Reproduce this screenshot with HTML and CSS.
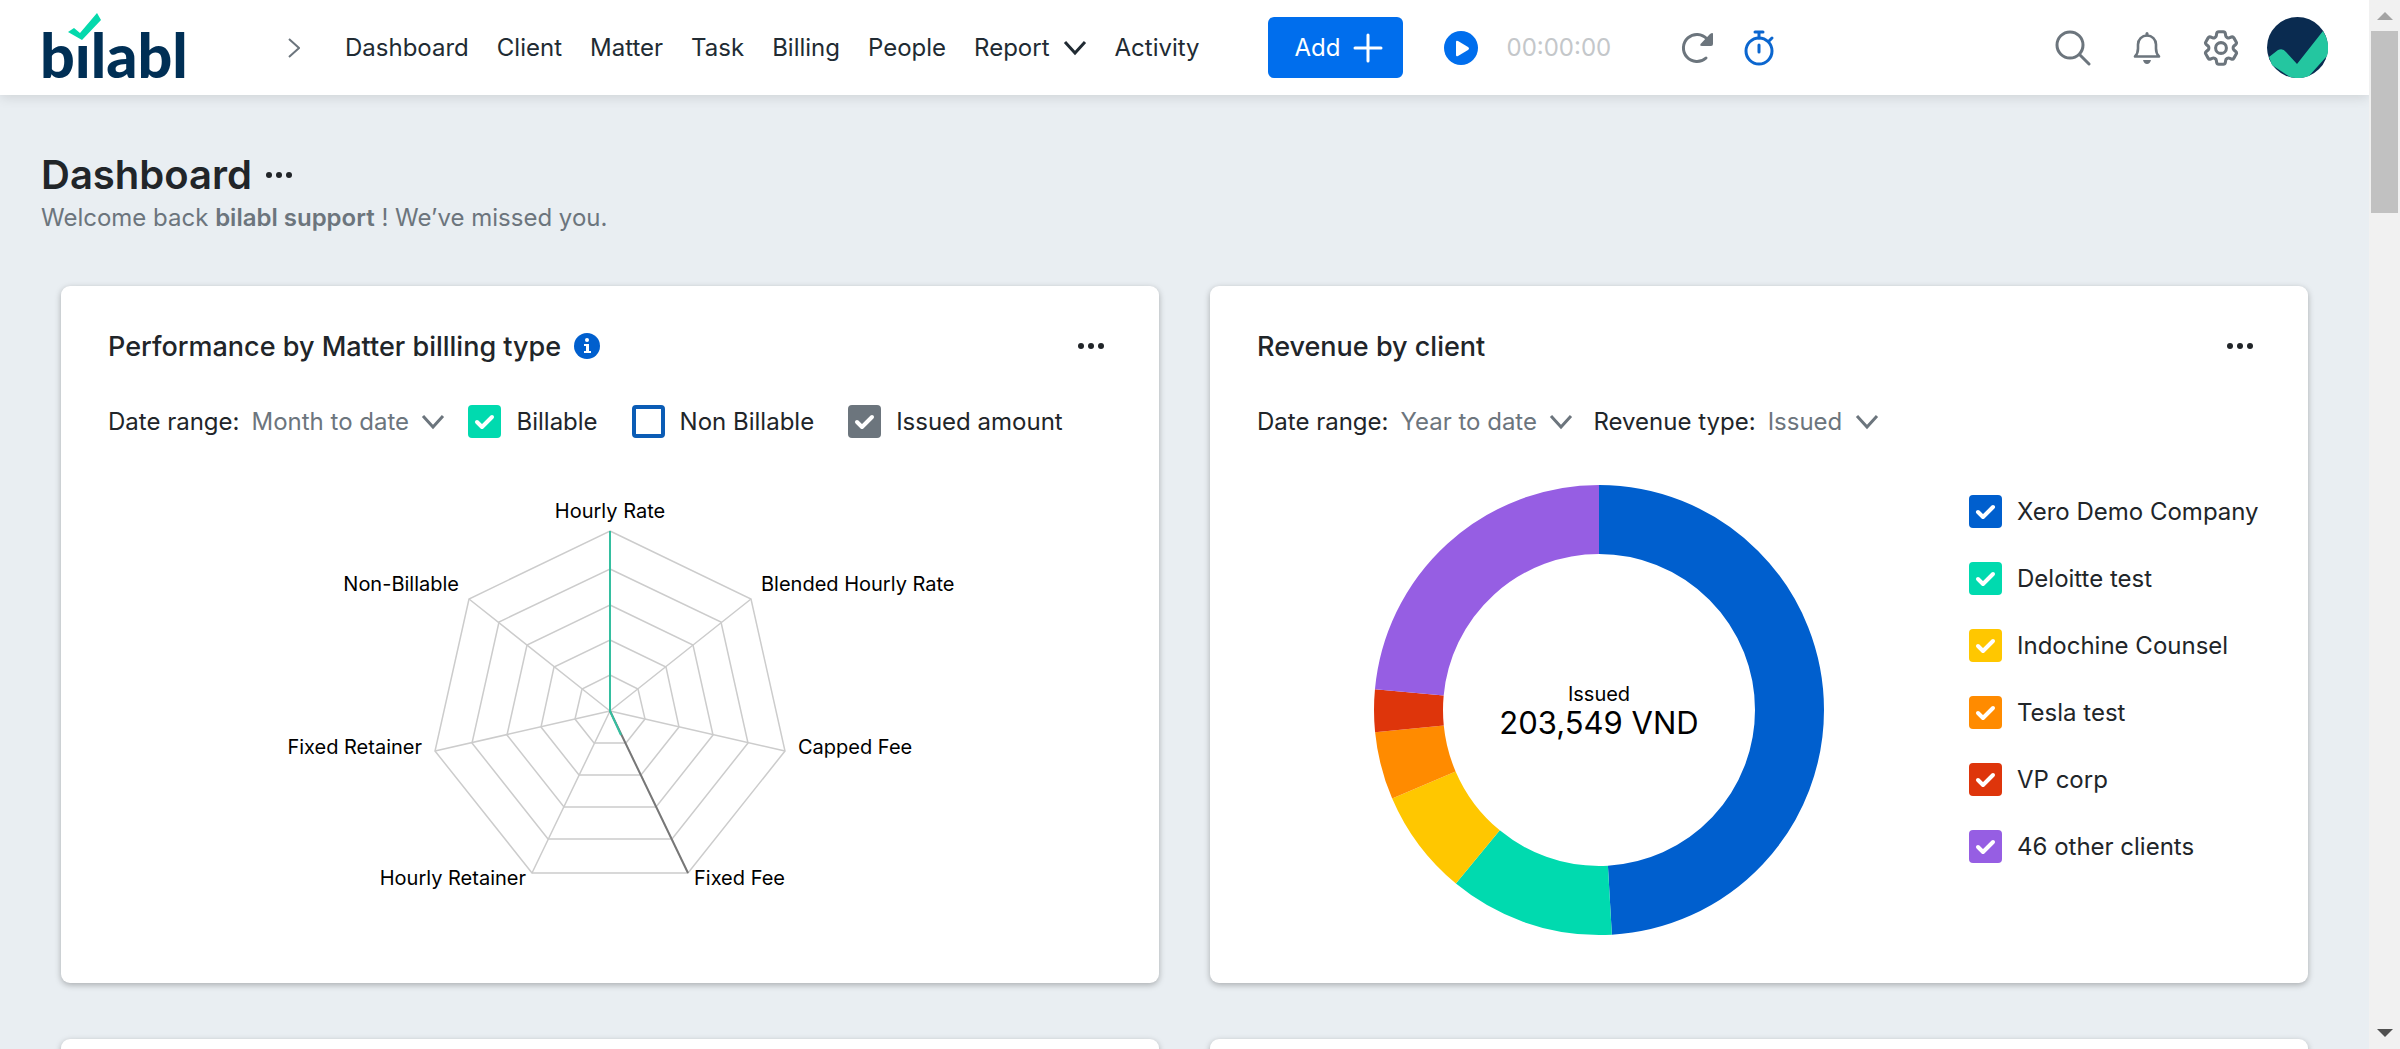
FILE: index.html
```
<!DOCTYPE html>
<html lang="en">
<head>
    <meta charset="UTF-8">
    <meta name="viewport" content="width=device-width, initial-scale=1.0">
    <title>bilabl - Dashboard</title>
    <link rel="stylesheet" href="styles.css">
</head>
<body>
    <div class="app">
        <header class="topbar">
            <a class="logo" href="#" aria-label="bilabl">
                <svg width="150" height="72" viewBox="0 0 150 72">
                    <text class="logo-text" x="0" y="66">bılabl</text>
                    <path d="M28 20l6-4 6 5L57 1l4 7-19 20z" fill="#04d9ac"/>
                </svg>
            </a>
            <button class="expand" aria-label="Expand menu">
                <svg width="12" height="22" viewBox="0 0 12 22"><path d="M1 2l10 9-10 9" fill="none" stroke="#6c757d" stroke-width="2"/></svg>
            </button>
            <nav class="nav">
                <a href="#">Dashboard</a>
                <a href="#">Client</a>
                <a href="#">Matter</a>
                <a href="#">Task</a>
                <a href="#">Billing</a>
                <a href="#">People</a>
                <a href="#" class="nav-drop">Report
                    <svg width="24" height="16" viewBox="0 0 24 16"><path d="M2 2l10 11 10-11" fill="none" stroke="#212b33" stroke-width="3"/></svg>
                </a>
                <a href="#">Activity</a>
            </nav>
            <button class="add-button">Add
                <svg width="30" height="30" viewBox="0 0 30 30"><path d="M15 2v26M2 15h26" stroke="#fff" stroke-width="3" stroke-linecap="round"/></svg>
            </button>
            <div class="timer">
                <button aria-label="Start timer">
                    <svg width="36" height="36" viewBox="0 0 36 36"><circle cx="18" cy="18" r="17" fill="#006eed"/><path d="M13 12v13q0 2 2 1l10-6q2-1.500 0-3l-10-6q-2-1-2 1z" fill="#fff"/></svg>
                </button>
                <span class="time">00:00:00</span>
            </div>
            <div class="timer-tools">
                <button aria-label="Reset timer">
                    <svg width="34" height="34" viewBox="0 0 34 34"><path d="M26 8a13.500 13.500 0 1 0-1 19" fill="none" stroke="#6c757d" stroke-width="3" stroke-linecap="round"/><path d="M32 3v10q0 2-2 2h-9q-3 0-1-2.500L29 3q3-2 3 0z" fill="#6c757d"/></svg>
                </button>
                <button aria-label="Time entries">
                    <svg width="32" height="36" viewBox="0 0 32 36"><g fill="none" stroke="#0b66cf" stroke-width="3" stroke-linecap="round"><circle cx="16" cy="21" r="13"/><path d="M12 2h8M16 3v5M16 15v7M26 11l3-3"/></g></svg>
                </button>
            </div>
            <div class="tools">
                <button aria-label="Search">
                    <svg width="36" height="36" viewBox="0 0 36 36"><g fill="none" stroke="#6c757d" stroke-width="3" stroke-linecap="round"><circle cx="15" cy="15" r="13"/><path d="M25 25l9 9"/></g></svg>
                </button>
                <button aria-label="Notifications">
                    <svg width="36" height="36" viewBox="0 0 36 36"><path d="M6 26.500h24c-2-2-3-4-3-8v-4c0-5-4-9-9-9s-9 4-9 9v4c0 4-1 6-3 8z" fill="none" stroke="#6c757d" stroke-width="2.600" stroke-linejoin="round"/><path d="M18 5V3.500" stroke="#6c757d" stroke-width="3" stroke-linecap="round"/><path d="M14 30h8q-1 4-4 4t-4-4z" fill="#6c757d"/></svg>
                </button>
                <button aria-label="Settings">
                    <svg width="36" height="36" viewBox="2 2 20 20"><g fill="none" stroke="#6c757d" stroke-width="1.700"><path d="M9.594 3.940c.09-.542.56-.94 1.110-.94h2.593c.55 0 1.020.398 1.110.94l.213 1.281c.063.374.313.686.645.87.074.04.147.083.22.127.325.196.72.257 1.075.124l1.217-.456a1.125 1.125 0 0 1 1.370.49l1.296 2.247a1.125 1.125 0 0 1-.26 1.431l-1.003.827c-.293.241-.438.613-.43.992a7.723 7.723 0 0 1 0 .255c-.008.378.137.75.43.991l1.004.827c.424.35.534.955.26 1.430l-1.298 2.247a1.125 1.125 0 0 1-1.369.491l-1.217-.456c-.355-.133-.75-.072-1.076.124a6.470 6.470 0 0 1-.22.128c-.331.183-.581.495-.644.869l-.213 1.281c-.09.543-.56.94-1.110.94h-2.594c-.55 0-1.019-.398-1.110-.94l-.213-1.281c-.062-.374-.312-.686-.644-.87a6.520 6.520 0 0 1-.22-.127c-.325-.196-.72-.257-1.076-.124l-1.217.456a1.125 1.125 0 0 1-1.369-.49l-1.297-2.247a1.125 1.125 0 0 1 .26-1.431l1.004-.827c.292-.24.437-.613.43-.991a6.932 6.932 0 0 1 0-.255c.007-.38-.138-.751-.43-.992l-1.004-.827a1.125 1.125 0 0 1-.26-1.430l1.297-2.247a1.125 1.125 0 0 1 1.370-.491l1.216.456c.356.133.751.072 1.076-.124.072-.044.146-.086.22-.128.332-.183.582-.495.644-.869l.214-1.280z"/><circle cx="12" cy="12" r="3"/></g></svg>
                </button>
            </div>
            <button class="avatar" aria-label="Account">
                <svg width="61" height="61" viewBox="0 0 61 61"><circle cx="30.500" cy="30.500" r="30.500" fill="#0a2b50"/><path d="M2 40l9-7q5-2 8 2l11 12 26-33a30.500 30.500 0 0 1 4 25L42 59a30 30 0 0 1-19 1L5 48z" fill="#24c6a0"/></svg>
            </button>
        </header>

        <main class="content">
            <div class="page-title">
                <h1>Dashboard</h1>
                <button class="more" aria-label="Dashboard options">
                    <svg width="26" height="8" viewBox="0 0 26 8"><g fill="#212529"><circle cx="3" cy="4" r="3"/><circle cx="13" cy="4" r="3"/><circle cx="23" cy="4" r="3"/></g></svg>
                </button>
            </div>
            <p class="welcome">Welcome back <b>bilabl support</b> ! We’ve missed you.</p>

            <div class="cards">
                <section class="card">
                    <div class="card-head">
                        <h2>Performance by Matter billling type</h2>
                        <svg class="info" width="28" height="28" viewBox="0 0 28 28"><circle cx="14" cy="14" r="13" fill="#005fce"/><g fill="#fff"><circle cx="14" cy="8" r="2"/><path d="M11 12h5v7h2v2h-7v-2h2v-5h-2z"/></g></svg>
                        <button class="more" aria-label="Card options">
                            <svg width="26" height="8" viewBox="0 0 26 8"><g fill="#212529"><circle cx="3" cy="4" r="3"/><circle cx="13" cy="4" r="3"/><circle cx="23" cy="4" r="3"/></g></svg>
                        </button>
                    </div>
                    <div class="filters">
                        <label for="perf-range">Date range:</label>
                        <select id="perf-range"><option>Month to date</option></select>
                        <div class="checks">
                            <label class="check"><input type="checkbox" class="teal" checked>Billable</label>
                            <label class="check"><input type="checkbox">Non Billable</label>
                            <label class="check"><input type="checkbox" class="gray" checked>Issued amount</label>
                        </div>
                    </div>
                    <svg class="radar" viewBox="-502 -226 1004 451" height="451">
                        <g class="grid-lines">
                            <polygon points="0,-180 141,-112 175,40 78,162 -78,162 -175,40 -141,-112"/>
                            <polygon points="0,-142 111,-89 138,32 62,128 -62,128 -138,32 -111,-89"/>
                            <polygon points="0,-106 83,-66 103,24 46,96 -46,96 -103,24 -83,-66"/>
                            <polygon points="0,-71 56,-44 69,16 31,64 -31,64 -69,16 -56,-44"/>
                            <polygon points="0,-36 28,-22 35,8 16,32 -16,32 -35,8 -28,-22"/>
                            <path d="M0 0V-180M0 0L141-112M0 0L175 40M0 0L78 162M0 0L-78 162M0 0L-175 40M0 0L-141-112"/>
                        </g>
                        <path class="line-issued" d="M0 0L78 162"/>
                        <path class="line-billable" d="M0-180V0L11 24"/>
                        <g class="radar-labels">
                            <text x="0" y="-193" text-anchor="middle">Hourly Rate</text>
                            <text x="151" y="-120">Blended Hourly Rate</text>
                            <text x="188" y="43">Capped Fee</text>
                            <text x="84" y="174">Fixed Fee</text>
                            <text x="-84" y="174" text-anchor="end">Hourly Retainer</text>
                            <text x="-188" y="43" text-anchor="end">Fixed Retainer</text>
                            <text x="-151" y="-120" text-anchor="end">Non-Billable</text>
                        </g>
                    </svg>
                </section>

                <section class="card">
                    <div class="card-head">
                        <h2>Revenue by client</h2>
                        <button class="more" aria-label="Card options">
                            <svg width="26" height="8" viewBox="0 0 26 8"><g fill="#212529"><circle cx="3" cy="4" r="3"/><circle cx="13" cy="4" r="3"/><circle cx="23" cy="4" r="3"/></g></svg>
                        </button>
                    </div>
                    <div class="filters">
                        <label for="rev-range">Date range:</label>
                        <select id="rev-range"><option>Year to date</option></select>
                        <label for="rev-type" class="second">Revenue type:</label>
                        <select id="rev-type"><option>Issued</option></select>
                    </div>
                    <div class="revenue">
                        <svg class="donut" viewBox="-225 -225 450 451" height="451">
                            <!-- one unit of dash is one degree -->
                            <g transform="rotate(-90)" fill="none" stroke-width="69">
                                <circle r="190.500" pathLength="360" stroke="#005fce" stroke-dasharray="176.700 360"/>
                                <circle r="190.500" pathLength="360" stroke="#00daaf" stroke-dasharray="42.800 360" stroke-dashoffset="-176.700"/>
                                <circle r="190.500" pathLength="360" stroke="#ffc700" stroke-dasharray="27.300 360" stroke-dashoffset="-219.500"/>
                                <circle r="190.500" pathLength="360" stroke="#ff8b00" stroke-dasharray="17.500 360" stroke-dashoffset="-246.800"/>
                                <circle r="190.500" pathLength="360" stroke="#de350b" stroke-dasharray="11 360" stroke-dashoffset="-264.300"/>
                                <circle r="190.500" pathLength="360" stroke="#965ee3" stroke-dasharray="84.700 360" stroke-dashoffset="-275.300"/>
                            </g>
                            <text class="donut-label" y="-9" text-anchor="middle">Issued</text>
                            <text class="donut-total" y="24" text-anchor="middle">203,549 VND</text>
                        </svg>
                        <div class="legend">
                            <label class="check"><input type="checkbox" class="blue" checked>Xero Demo Company</label>
                            <label class="check"><input type="checkbox" class="teal" checked>Deloitte test</label>
                            <label class="check"><input type="checkbox" class="yellow" checked>Indochine Counsel</label>
                            <label class="check"><input type="checkbox" class="orange" checked>Tesla test</label>
                            <label class="check"><input type="checkbox" class="red" checked>VP corp</label>
                            <label class="check"><input type="checkbox" class="purple" checked>46 other clients</label>
                        </div>
                    </div>
                </section>

                <section class="card"></section>
                <section class="card"></section>
            </div>
        </main>
    </div>
    <div class="scrollbar">
        <svg width="16" height="31" viewBox="0 0 16 31"><path d="M0 20l8-8 8 8z" fill="#a3a3a3"/></svg>
        <div class="thumb"></div>
        <svg class="down" width="16" height="31" viewBox="0 0 16 31"><path d="M0 11l8 8 8-8z" fill="#505050"/></svg>
    </div>
</body>
</html>
```
FILE: styles.css
```
*{box-sizing:border-box}
body{font-family:Inter,"Liberation Sans",sans-serif;font-size:24px;margin:0;height:100vh;display:flex;overflow:hidden;background-color:#e9eef2;color:#212529}
button{font:inherit;color:inherit;background:none;border:none;padding:0;cursor:pointer;display:flex;align-items:center}
a{color:inherit;text-decoration:none}
h1,h2,p{margin:0}
svg{display:block;flex:none}

.app{flex:1;min-width:0;height:100vh;overflow:hidden}
.topbar{height:95px;display:flex;align-items:center;padding:0 41px 0 40px;background:#fff;box-shadow:0 2px 12px rgba(0,0,0,0.12);position:relative}
.logo svg{overflow:visible}
.logo-text{font-family:Lato,sans-serif;font-size:61px;font-weight:900;fill:#002f55}
.expand{margin-left:98px}
.nav{display:flex;gap:28px;margin-left:45px;color:#212b33}
.nav-drop{display:flex;align-items:center;gap:13px}
.add-button{height:61px;margin-left:68px;padding:0 20px 0 27px;gap:12px;background-color:#006eed;color:#fff;border-radius:6px}
.timer{display:flex;align-items:center;gap:28px;margin-left:40px}
.time{color:#c4c7ca}
.timer-tools{display:flex;align-items:center;gap:28px;margin-left:70px}
.tools{display:flex;gap:38px;margin-left:auto}
.avatar{margin-left:28px;border-radius:50%}

.content{padding:56px 41px 0}
.page-title{display:flex;align-items:center;gap:14px}
.page-title h1{font-size:40px;font-weight:600;line-height:48px}
.welcome{line-height:38px;color:#6c757d}
.welcome b{font-weight:600}

.cards{display:grid;grid-template-columns:1fr 1fr;gap:56px 51px;padding:49px 20px 0}
.card{background:#fff;border-radius:9px;padding:38px 47px 47px;box-shadow:0 2px 6px rgba(0,0,0,0.28)}
.card-head{display:flex;align-items:center;height:44px}
.card-head h2{font-size:27px;font-weight:500}
.card-head .more{margin-left:auto;margin-right:8px}
.info{margin-left:12px}
.filters{display:flex;align-items:center;height:43px;margin:32px 0 42px}
select{font:inherit;color:#6c757d;border:none;background:url("data:image/svg+xml,%3Csvg xmlns='http://www.w3.org/2000/svg' width='24' height='16'%3E%3Cpath d='M2 2l10 11 10-11' fill='none' stroke='%236c757d' stroke-width='3'/%3E%3C/svg%3E") right center no-repeat;appearance:none;padding:0 36px 0 0;margin-left:12px}
.second{margin-left:20px}
.checks{display:flex;gap:34px;margin-left:23px}
.check{display:flex;align-items:center;gap:15px;white-space:nowrap}
.check input{appearance:none;width:33px;height:33px;margin:0;border:4px solid #0b5cb5;border-radius:4px}
.check input:checked{border:none;background:#6c757d url("data:image/svg+xml,%3Csvg xmlns='http://www.w3.org/2000/svg' width='33' height='33'%3E%3Cpath d='M9 17l5 5 10-10' fill='none' stroke='%23fff' stroke-width='4' stroke-linecap='round' stroke-linejoin='round'/%3E%3C/svg%3E") center no-repeat}
.check input.blue{background-color:#005fce}
.check input.teal{background-color:#00daaf}
.check input.yellow{background-color:#ffc700}
.check input.orange{background-color:#ff8b00}
.check input.red{background-color:#de350b}
.check input.purple{background-color:#965ee3}

.radar{width:100%}
.grid-lines{fill:none;stroke:#ccc;stroke-width:1.5}
.line-issued{fill:none;stroke:#777;stroke-width:2}
.line-billable{fill:none;stroke:#35bfa0;stroke-width:2}
.radar-labels{font-size:20px}
.revenue{display:flex;gap:28px}
.donut{flex:1;min-width:0}
.donut-label{font-size:20px}
.donut-total{font-size:31px;fill:#000}
.legend{display:flex;flex-direction:column;gap:34px;width:292px;padding-top:10px}

.scrollbar{width:31px;flex:none;display:flex;flex-direction:column;align-items:center;background-color:#f1f1f1}
.thumb{width:27px;height:182px;background-color:#c1c1c1}
.down{margin-top:auto}
```
